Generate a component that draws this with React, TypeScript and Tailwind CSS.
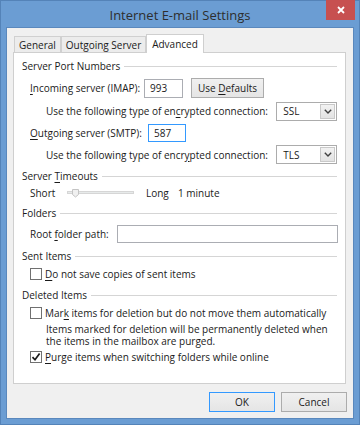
import React from "react";

function U({ children }: { children: React.ReactNode }) {
  return <span className="underline underline-offset-[2px] decoration-[1px]">{children}</span>;
}

function GroupHeader({ children, mt }: { children: React.ReactNode; mt: string }) {
  return (
    <div className={"flex items-center h-[16px] gap-[4px] " + mt}>
      <span className="whitespace-nowrap">{children}</span>
      <div className="flex-1 h-[2px] border-t border-[#d5d5d5] border-b border-b-white mt-[1px]" />
    </div>
  );
}

function Select({ value }: { value: string }) {
  return (
    <div className="w-[61px] h-[19px] border border-[#acacac] bg-white flex items-center">
      <span className="flex-1 pl-[6px]">{value}</span>
      <div className="w-[15px] h-[15px] mr-[1px] border border-[#c9c9c9] bg-gradient-to-b from-[#f2f2f2] to-[#e3e3e3] flex items-center justify-center">
        <svg width="8" height="5" viewBox="0 0 8 5">
          <path d="M0.8 0.8 L4 4 L7.2 0.8" fill="none" stroke="#404040" strokeWidth="1.4" />
        </svg>
      </div>
    </div>
  );
}

function Checkbox({ checked }: { checked?: boolean }) {
  return (
    <div className="w-[12px] h-[12px] border border-[#707070] bg-white flex items-center justify-center shrink-0">
      {checked && (
        <svg width="10" height="10" viewBox="0 0 10 10">
          <path d="M1.5 5.2 L4 7.8 L8.6 1.6" fill="none" stroke="#1a1a1a" strokeWidth="1.7" />
        </svg>
      )}
    </div>
  );
}

function Button({ children, def, w }: { children: React.ReactNode; def?: boolean; w: string }) {
  return (
    <div
      className={
        "h-[20px] flex items-center justify-center bg-gradient-to-b from-[#f0f0f0] to-[#e5e5e5] border " +
        w +
        (def ? " border-[#3399ff]" : " border-[#acacac]")
      }
    >
      <span>{children}</span>
    </div>
  );
}

export default function App() {
  return (
    <div className="w-[360px] h-[425px] bg-[#6b9dd3] border border-[#5483b8] flex flex-col font-['Open_Sans',sans-serif] text-[10px] leading-[12px] text-[#1a1a1a]">
      {/* Title bar */}
      <div className="relative h-[26px] flex items-center justify-center">
        <span className="text-[13px] leading-[16px] text-[#2e2e2e] mt-[1px]">Internet E-mail Settings</span>
        <div className="absolute top-[-1px] left-[325px] w-[29px] h-[20px] bg-[#c75050] flex items-center justify-center">
          <svg width="8" height="8" viewBox="0 0 8 8">
            <path d="M1 1 L7 7 M7 1 L1 7" stroke="white" strokeWidth="1.8" />
          </svg>
        </div>
      </div>

      {/* Client area */}
      <div className="mx-[5px] mb-[5px] flex-1 border border-[#5a88bd] bg-[#f0f0f0] flex flex-col pt-[6px] pl-[6px] pr-[7px]">
        {/* Tabs */}
        <div className="flex items-end h-[18px] pl-[1px]">
          <div className="w-[47px] h-[16px] border border-b-0 border-[#d0d0d0] bg-[#ececec] flex items-center justify-center">
            General
          </div>
          <div className="w-[85px] h-[16px] border border-b-0 border-[#d0d0d0] bg-[#ececec] flex items-center justify-center">
            Outgoing Server
          </div>
          <div className="relative z-10 w-[58px] h-[19px] mb-[-1px] border border-b-0 border-[#cfcfcf] bg-white flex items-center justify-center pb-[1px]">
            Advanced
          </div>
        </div>

        {/* Panel */}
        <div className="h-[332px] border border-[#cfcfcf] bg-white px-[8px] flex flex-col">
          <GroupHeader mt="mt-[5px]">Server Port Numbers</GroupHeader>

          <div className="flex items-center h-[20px] mt-[4px] pl-[8px]">
            <span className="w-[114px]">
              <U>I</U>ncoming server (IMAP):
            </span>
            <div className="w-[39px] h-[19px] border border-[#abadb3] bg-white flex items-center pl-[5px]">993</div>
            <div className="ml-[8px]">
              <Button w="w-[73px]">
                Use <U>D</U>efaults
              </Button>
            </div>
          </div>

          <div className="flex items-center h-[20px] mt-[3px] pl-[24px]">
            <span className="w-[231px]">
              Use the following type of en<U>c</U>rypted connection:
            </span>
            <Select value="SSL" />
          </div>

          <div className="flex items-center h-[19px] mt-[2px] pl-[8px]">
            <span className="w-[118px]">
              <U>O</U>utgoing server (SMTP):
            </span>
            <div className="w-[38px] h-[18px] border border-[#3399ff] bg-white flex items-center pl-[5px]">587</div>
          </div>

          <div className="flex items-center h-[19px] mt-[3px] pl-[24px]">
            <span className="w-[231px]">
              Use the following type of encr<U>y</U>pted connection:
            </span>
            <Select value="TLS" />
          </div>

          <GroupHeader mt="mt-[4px]">
            Server <U>T</U>imeouts
          </GroupHeader>

          <div className="flex items-center h-[16px] mt-[1px] pl-[8px]">
            <span className="w-[37px]">Short</span>
            <svg width="68" height="12" viewBox="0 0 68 12" className="mr-[11px]">
              <rect x="0.5" y="4.5" width="66" height="2" fill="#e7eaea" stroke="#d6d6d6" />
              <path d="M5.5 2.5 H11.5 V7.5 L8.5 10 L5.5 7.5 Z" fill="#f0f0f0" stroke="#c4c4c4" />
            </svg>
            <span className="w-[32px]">Long</span>
            <span>1 minute</span>
          </div>

          <GroupHeader mt="mt-[4px]">Folders</GroupHeader>

          <div className="flex items-center h-[19px] mt-[3px] pl-[8px]">
            <span className="w-[87px]">
              Root <U>f</U>older path:
            </span>
            <div className="flex-1 mr-[-1px] h-[18px] border border-[#abadb3] bg-white" />
          </div>

          <GroupHeader mt="mt-[5px]">Sent Items</GroupHeader>

          <div className="flex items-center h-[16px] mt-[2px] pl-[8px] gap-[3px]">
            <Checkbox />
            <span>
              <U>D</U>o not save copies of sent items
            </span>
          </div>

          <GroupHeader mt="mt-[5px]">Deleted Items</GroupHeader>

          <div className="flex items-center h-[16px] mt-[2px] pl-[8px] gap-[3px]">
            <Checkbox />
            <span>
              Mar<U>k</U> items for deletion but do not move them automatically
            </span>
          </div>

          <div className="mt-[2px] pl-[24px] leading-[12px] flex flex-col">
            <span>Items marked for deletion will be permanently deleted when</span>
            <span>the items in the mailbox are purged.</span>
          </div>

          <div className="flex items-center h-[16px] mt-[2px] pl-[8px] gap-[3px]">
            <Checkbox checked />
            <span>
              <U>P</U>urge items when switching folders while online
            </span>
          </div>
        </div>

        {/* Buttons */}
        <div className="flex justify-end gap-[6px] mt-[8px] mr-[-1px]">
          <Button def w="w-[66px]">
            OK
          </Button>
          <Button w="w-[66px]">Cancel</Button>
        </div>
      </div>
    </div>
  );
}
